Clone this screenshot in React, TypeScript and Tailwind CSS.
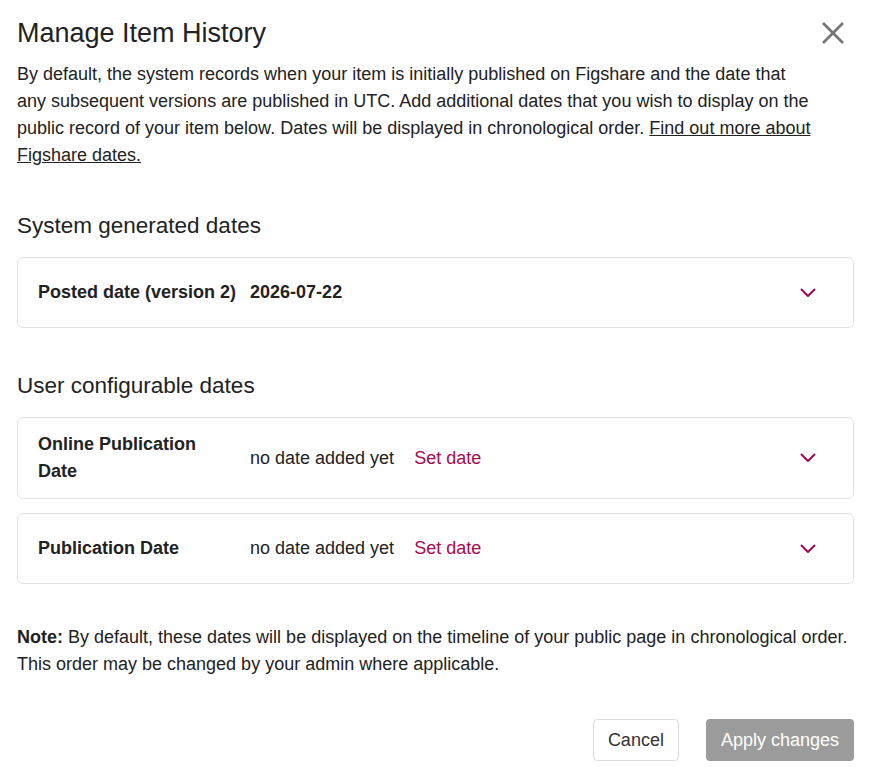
const userDates = [
  { label: "Online Publication Date" },
  { label: "Publication Date" },
];

function Chevron() {
  return (
    <svg width="16" height="10" viewBox="0 0 16 10" fill="none" stroke="#a30b4f" strokeWidth="2" strokeLinecap="round" strokeLinejoin="round">
      <polyline points="1.5,1.5 8,8 14.5,1.5" />
    </svg>
  );
}

function DateRow({ label, children }: { label: string; children: React.ReactNode }) {
  return (
    <div className="border border-[#e3e3e3] rounded-[6px] pl-[20px] py-[13px]">
      <div className="flex items-center min-h-[43px]">
        <div className="w-[212px] pr-[20px] font-bold text-[18px] leading-[27px]">{label}</div>
        <div className="flex-1 flex items-center text-[18px] leading-[27px]">{children}</div>
        <button className="w-[46px] h-[42px] mr-[22px] flex items-center justify-center">
          <Chevron />
        </button>
      </div>
    </div>
  );
}

export default function App() {
  return (
    <div className="min-h-screen bg-white text-[#222] px-[17px] pt-[16px] pb-[16px] font-['Liberation_Sans',Arial,sans-serif]">
      <div className="flex items-center justify-between h-[34px]">
        <h1 className="text-[27px] leading-[34px] font-normal">Manage Item History</h1>
        <button className="w-[34px] h-[34px] flex items-center justify-center mr-[4px]">
          <svg width="22" height="22" viewBox="0 0 22 22" stroke="#767676" strokeWidth="2.6" strokeLinecap="butt">
            <line x1="1" y1="1" x2="21" y2="21" />
            <line x1="21" y1="1" x2="1" y2="21" />
          </svg>
        </button>
      </div>

      <p className="mt-[11px] text-[18px] leading-[27px] pr-[20px]">
        By default, the system records when your item is initially published on Figshare and the date that
        <br />
        any subsequent versions are published in UTC. Add additional dates that you wish to display on the public record of your item below. Dates will be displayed in chronological order.{" "}
        <a href="#" className="underline">Find out more about Figshare dates.</a>
      </p>

      <h2 className="mt-[42px] text-[22.5px] leading-[30px] font-normal">System generated dates</h2>
      <div className="mt-[16px]">
        <div className="border border-[#e3e3e3] rounded-[6px] pl-[20px] py-[13px]">
          <div className="flex items-center min-h-[43px]">
            <div className="flex-1 font-bold text-[18px] leading-[27px]">
              Posted date (version 2)<span className="ml-[14px]">2026-07-22</span>
            </div>
            <button className="w-[46px] h-[42px] mr-[22px] flex items-center justify-center">
              <Chevron />
            </button>
          </div>
        </div>
      </div>

      <h2 className="mt-[43px] text-[22.5px] leading-[30px] font-normal">User configurable dates</h2>
      <div className="mt-[16px] flex flex-col gap-[14px]">
        {userDates.map((d) => (
          <DateRow key={d.label} label={d.label}>
            <span>no date added yet</span>
            <a href="#" className="ml-[20px] text-[#a30b4f]">Set date</a>
          </DateRow>
        ))}
      </div>

      <p className="mt-[40px] text-[18px] leading-[27px]">
        <span className="font-bold">Note:</span> By default, these dates will be displayed on the timeline of your public page in chronological order. This order may be changed by your admin where applicable.
      </p>

      <div className="mt-[41px] flex justify-end gap-[27px]">
        <button className="h-[42px] px-[14px] border border-[#dcdcdc] rounded-[4px] text-[18px] text-[#333] bg-white">Cancel</button>
        <button className="h-[42px] px-[15px] rounded-[4px] text-[18px] text-white bg-[#9b9b9b]">Apply changes</button>
      </div>
    </div>
  );
}
